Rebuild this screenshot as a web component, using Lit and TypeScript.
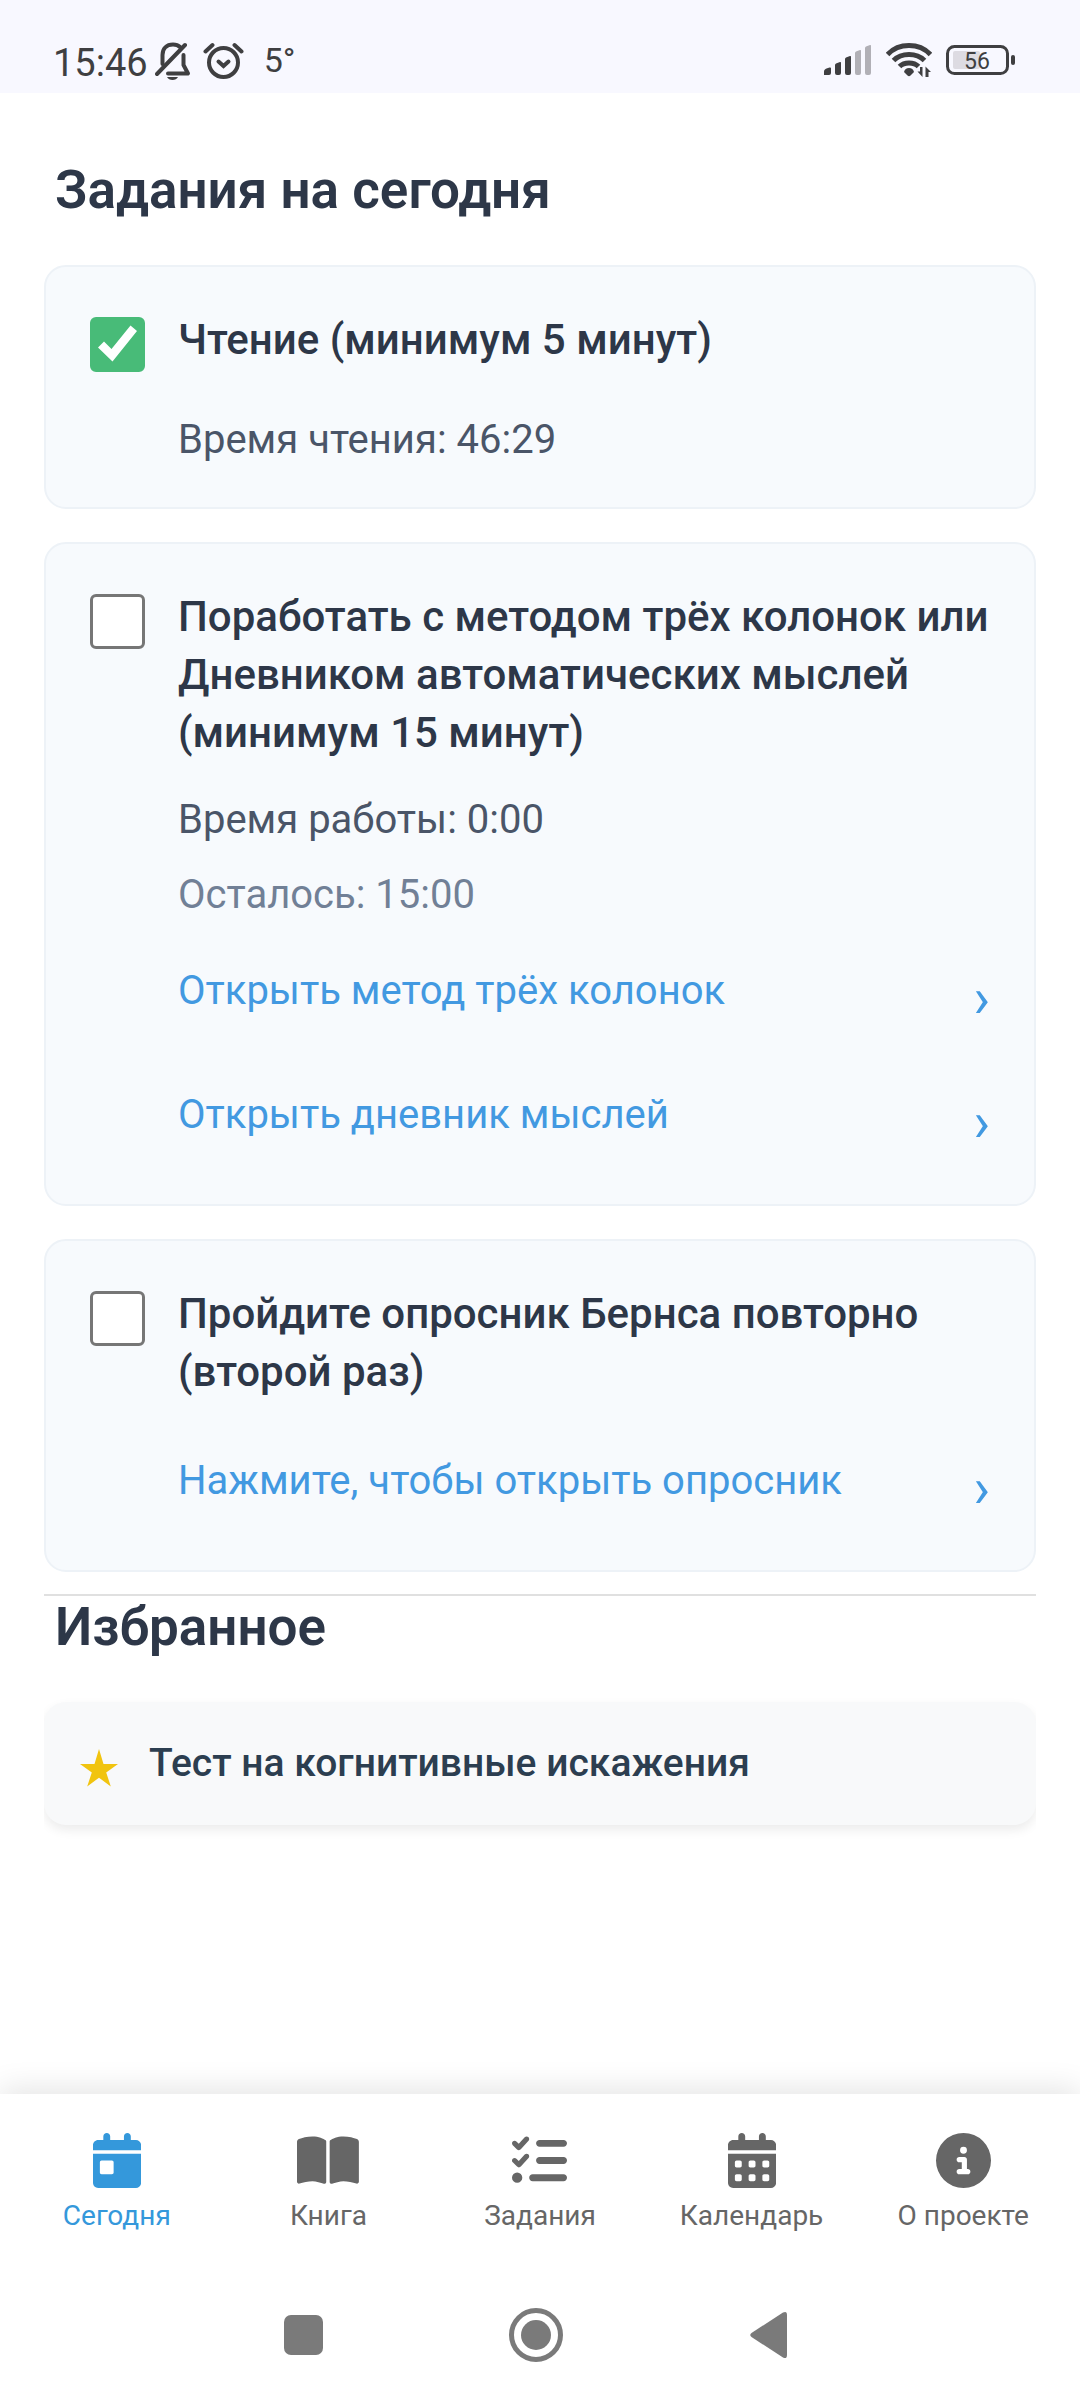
import { LitElement, html, svg, css, nothing, type SVGTemplateResult } from "lit";
import { customElement, property } from "lit/decorators.js";

interface Task {
  id: string;
  title: string;
  done: boolean;
  spent?: string;
  left?: string;
  links: string[];
}

interface Tab {
  label: string;
  href: string;
  width: number;
  icon: SVGTemplateResult;
}

const TASKS: Task[] = [
  { id: "reading", title: "Чтение (минимум 5 минут)", done: true, spent: "Время чтения: 46:29", links: [] },
  {
    id: "columns",
    title: "Поработать с методом трёх колонок или Дневником автоматических мыслей (минимум 15 минут)",
    done: false,
    spent: "Время работы: 0:00",
    left: "Осталось: 15:00",
    links: ["Открыть метод трёх колонок", "Открыть дневник мыслей"],
  },
  {
    id: "burns",
    title: "Пройдите опросник Бернса повторно (второй раз)",
    done: false,
    links: ["Нажмите, чтобы открыть опросник"],
  },
];

const TABS: Tab[] = [
  {
    label: "Сегодня",
    href: "#today",
    width: 448,
    icon: svg`<path d="M128 0c17.7 0 32 14.3 32 32V64H288V32c0-17.7 14.3-32 32-32s32 14.3 32 32V64h48c26.5 0 48 21.5 48 48v48H0V112C0 85.500 21.500 64 48 64H96V32c0-17.700 14.300-32 32-32zM0 192H448V464c0 26.500-21.500 48-48 48H48c-26.500 0-48-21.500-48-48V192zm80 64c-8.800 0-16 7.200-16 16v96c0 8.800 7.200 16 16 16h96c8.800 0 16-7.200 16-16V272c0-8.800-7.200-16-16-16H80z"/>`,
  },
  {
    label: "Книга",
    href: "#book",
    width: 576,
    icon: svg`<path d="M249.600 471.500c10.800 3.800 22.400-4.100 22.400-15.500V78.600c0-4.200-1.600-8.400-5-11C247.400 52 202.400 32 144 32C93.500 32 46.300 45.300 18.100 56.100C6.800 60.500 0 71.700 0 83.800V454.100c0 11.900 12.800 20.200 24.100 16.500C55.600 460.100 105.500 448 144 448c33.900 0 79 14 105.600 23.500zm76.800 0C353 462 398.100 448 432 448c38.500 0 88.400 12.100 119.900 22.600c11.300 3.800 24.100-4.600 24.100-16.500V83.800c0-12.100-6.800-23.300-18.100-27.600C529.700 45.300 482.500 32 432 32c-58.400 0-103.400 20-123 35.600c-3.300 2.600-5 6.800-5 11V456c0 11.400 11.700 19.300 22.400 15.500z"/>`,
  },
  {
    label: "Задания",
    href: "#tasks",
    width: 512,
    icon: svg`<path d="M152.100 38.200c9.900 8.900 10.700 24 1.800 33.900l-72 80c-4.400 4.900-10.600 7.800-17.200 7.900s-12.900-2.400-17.600-7L7 113C-2.300 103.600-2.300 88.400 7 79s24.600-9.400 33.900 0l22.100 22.100 55.100-61.200c8.900-9.900 24-10.700 33.900-1.800zm0 160c9.900 8.900 10.700 24 1.800 33.900l-72 80c-4.400 4.900-10.600 7.800-17.200 7.900s-12.900-2.400-17.600-7L7 273c-9.400-9.400-9.400-24.600 0-33.900s24.600-9.400 33.900 0l22.100 22.100 55.100-61.200c8.900-9.900 24-10.700 33.900-1.800zM224 96c0-17.700 14.300-32 32-32H480c17.700 0 32 14.300 32 32s-14.300 32-32 32H256c-17.700 0-32-14.300-32-32zm0 160c0-17.700 14.300-32 32-32H480c17.700 0 32 14.300 32 32s-14.300 32-32 32H256c-17.700 0-32-14.300-32-32zM160 416c0-17.700 14.300-32 32-32H480c17.700 0 32 14.300 32 32s-14.300 32-32 32H192c-17.700 0-32-14.300-32-32zM48 368a48 48 0 1 1 0 96 48 48 0 1 1 0-96z"/>`,
  },
  {
    label: "Календарь",
    href: "#calendar",
    width: 448,
    icon: svg`<path fill-rule="evenodd" d="M128 0c17.700 0 32 14.300 32 32V64H288V32c0-17.700 14.300-32 32-32s32 14.300 32 32V64h48c26.500 0 48 21.500 48 48v48H0V112C0 85.500 21.500 64 48 64H96V32c0-17.700 14.300-32 32-32zM0 192H448V464c0 26.500-21.500 48-48 48H48c-26.500 0-48-21.500-48-48V192zM80 256c-8.800 0-16 7.200-16 16v32c0 8.800 7.200 16 16 16h32c8.800 0 16-7.200 16-16v-32c0-8.800-7.200-16-16-16zM208 256c-8.800 0-16 7.200-16 16v32c0 8.800 7.200 16 16 16h32c8.800 0 16-7.200 16-16v-32c0-8.800-7.200-16-16-16zM336 256c-8.800 0-16 7.200-16 16v32c0 8.800 7.200 16 16 16h32c8.800 0 16-7.200 16-16v-32c0-8.800-7.200-16-16-16zM80 384c-8.800 0-16 7.200-16 16v32c0 8.800 7.200 16 16 16h32c8.800 0 16-7.200 16-16v-32c0-8.800-7.200-16-16-16zM208 384c-8.800 0-16 7.200-16 16v32c0 8.800 7.200 16 16 16h32c8.800 0 16-7.200 16-16v-32c0-8.800-7.200-16-16-16zM336 384c-8.800 0-16 7.200-16 16v32c0 8.800 7.200 16 16 16h32c8.800 0 16-7.200 16-16v-32c0-8.800-7.200-16-16-16z"/>`,
  },
  {
    label: "О проекте",
    href: "#about",
    width: 512,
    icon: svg`<path d="M256 512A256 256 0 1 0 256 0a256 256 0 1 0 0 512zM216 336h24V272H216c-13.300 0-24-10.700-24-24s10.700-24 24-24h48c13.300 0 24 10.700 24 24v88h8c13.300 0 24 10.700 24 24s-10.700 24-24 24H216c-13.300 0-24-10.700-24-24s10.700-24 24-24zm40-208a32 32 0 1 1 0 64 32 32 0 1 1 0-64z"/>`,
  },
];

@customElement("status-bar")
export class StatusBar extends LitElement {
  static styles = css`
    :host {
      display: flex;
      justify-content: space-between;
      align-items: flex-start;
      padding: 42px 65px 9px 53px;
      background: #f8f8ff;
      color: #3f3f41;
    }
    .group {
      display: flex;
      align-items: flex-start;
    }
    .time {
      font-size: 38px;
      line-height: 42px;
    }
    .bell {
      margin-left: 7px;
    }
    .alarm {
      margin-left: 12px;
    }
    .temp {
      margin-left: 20px;
      font-size: 34px;
      line-height: 36px;
    }
    .signals {
      align-items: center;
      gap: 14px;
    }
  `;

  render() {
    return html`
      <div class="group">
        <span class="time">15:46</span>
        <svg class="bell" width="36" height="38" viewBox="0 0 36 38" fill="none" stroke="currentColor" stroke-width="4" stroke-linecap="round" aria-hidden="true">
          <path d="M2 32L30 3" />
          <path d="M7.500 22V13C7.500 6.500 11.500 2.500 18 2.500C21 2.500 23.500 3.500 25 5" />
          <path d="M28.500 13v10L33 31.500H13" stroke-linejoin="round" />
          <path d="M12 35h11c-1 2-3 3-5.500 3s-4.500-1-5.500-3z" fill="currentColor" stroke="none" />
        </svg>
        <svg class="alarm" width="41" height="38" viewBox="0 0 41 38" fill="none" stroke="currentColor" stroke-width="4" stroke-linecap="round" aria-hidden="true">
          <circle cx="20.500" cy="20.500" r="14.500" />
          <path d="M2.500 9.500L9.500 3M38.500 9.500L31.500 3" />
          <path d="M15.500 19.500l5 4.500 5-4.500" />
        </svg>
        <span class="temp">5°</span>
      </div>
      <div class="group signals">
        <svg width="48" height="32" viewBox="0 0 48 32" aria-hidden="true">
          <g fill="currentColor">
            <path d="M0 31v-3.500c0-1.500 1-2.500 2.500-3l3-1q1.500-.5 1.500 1V29q0 2-2 2z" />
            <path d="M11 29V21q0-1 1-1.500l4-1.500q1-.5 1 1v10q0 2-2 2h-2q-2 0-2-2z" />
            <path d="M21 29V15q0-1 1-1.500l4-1.500q1-.5 1 1v16q0 2-2 2h-2q-2 0-2-2z" />
          </g>
          <g fill="#b1b0b6">
            <path d="M31 29V9q0-1 1-1.500l4-1.500q1-.5 1 1v22q0 2-2 2h-2q-2 0-2-2z" />
            <path d="M41 29V4q0-1 1-1.500l4-1.500q1-.5 1 1v27q0 2-2 2h-2q-2 0-2-2z" />
          </g>
        </svg>
        <svg width="46" height="36" viewBox="0 0 46 36" fill="none" stroke="currentColor" stroke-width="5" aria-hidden="true">
          <path d="M1.500 12.500Q10 3.500 23 3.500T44.500 12.500" />
          <path d="M7.500 18.500Q13.500 12.500 23 12.500T38.500 18.500" />
          <path d="M13.500 24.500Q17 21 23 21T32.500 24.500" />
          <path d="M18 30q1-4 5-4t5 4l-3.500 3.500q-1.500 1.500-3 0z" fill="currentColor" stroke="none" />
          <path d="M36.500 25v10l-5-5.500h2.500v-4.500zM39.500 35V24.500l5.500 5.500h-2.500v5z" fill="currentColor" stroke="none" />
        </svg>
        <svg width="69" height="30" viewBox="0 0 69 30" aria-hidden="true">
          <rect x="7" y="6" width="27" height="18" rx="2" fill="#dddbe2" />
          <rect x="1.500" y="1.500" width="60" height="27" rx="7" fill="none" stroke="currentColor" stroke-width="3" />
          <rect x="65" y="10" width="4" height="10" rx="2" fill="currentColor" />
          <text x="31" y="24" text-anchor="middle" font-size="23" fill="currentColor">56</text>
        </svg>
      </div>
    `;
  }
}

@customElement("task-card")
export class TaskCard extends LitElement {
  @property({ attribute: false }) task!: Task;

  static styles = css`
    :host {
      display: block;
    }
    .card {
      display: grid;
      grid-template-columns: 55px 1fr;
      column-gap: 33px;
      padding: 44px;
      border: 2px solid #edf2f7;
      border-radius: 22px;
      background: #f7fafd;
    }
    .check {
      display: grid;
      align-self: start;
      margin-top: 6px;
    }
    .box,
    .tick {
      grid-area: 1 / 1;
      width: 55px;
      height: 55px;
    }
    .box {
      box-sizing: border-box;
      appearance: none;
      margin: 0;
      border: 3px solid #767676;
      border-radius: 6px;
      background: #ffffff;
    }
    .box:checked {
      border-color: #48bb78;
      background: #48bb78;
    }
    .tick {
      pointer-events: none;
      visibility: hidden;
    }
    .box:checked + .tick {
      visibility: visible;
    }
    .title {
      display: block;
      font-size: 42px;
      font-weight: 500;
      line-height: 58px;
      color: #2d3748;
    }
    .meta {
      display: grid;
      gap: 28px;
      margin-top: 34px;
    }
    .meta.done {
      margin-top: 47px;
    }
    .line {
      margin: 0;
      font-size: 40px;
      line-height: 47px;
      color: #4a5568;
    }
    .line.left {
      color: #718096;
    }
    .links {
      display: grid;
      gap: 33px;
      margin-top: 34px;
    }
    .meta + .links {
      margin-top: 27px;
    }
    .link {
      display: flex;
      justify-content: space-between;
      align-items: flex-start;
      padding: 22px 0 6px;
      font-size: 40px;
      line-height: 47px;
      color: #4299e1;
      text-decoration: none;
    }
    .arrow {
      font-size: 55px;
      line-height: 63px;
    }
  `;

  render() {
    const { id, title, done, spent, left, links } = this.task;
    return html`
      <article class="card">
        <div class="check">
          <input class="box" type="checkbox" id=${id} .checked=${done} />
          <svg class="tick" viewBox="0 0 55 55" aria-hidden="true">
            <path d="M8 30.500L14 24.500L21.500 32L40.500 8.500L47 14L22.500 44.500Z" fill="#ffffff" />
          </svg>
        </div>
        <div class="body">
          <label class="title" for=${id}>${title}</label>
          ${spent
            ? html`<div class="meta ${done ? "done" : ""}">
                <p class="line">${spent}</p>
                ${left ? html`<p class="line left">${left}</p>` : nothing}
              </div>`
            : nothing}
          ${links.length
            ? html`<div class="links">
                ${links.map((text) => html`<a class="link" href="#${id}"><span>${text}</span><span class="arrow" aria-hidden="true">›</span></a>`)}
              </div>`
            : nothing}
        </div>
      </article>
    `;
  }
}

@customElement("tab-bar")
export class TabBar extends LitElement {
  static styles = css`
    :host {
      display: block;
      background: #ffffff;
      box-shadow: 0 -6px 28px rgba(0, 0, 0, 0.1);
    }
    .tabs {
      display: grid;
      grid-template-columns: repeat(5, 1fr);
      padding: 39px 11px 38px;
    }
    .tab {
      display: flex;
      flex-direction: column;
      align-items: center;
      gap: 11px;
      font-size: 28px;
      line-height: 33px;
      color: #666666;
      text-decoration: none;
    }
    .tab[aria-current] {
      color: #3498db;
    }
    .icon {
      height: 55px;
      fill: currentColor;
    }
  `;

  render() {
    return html`
      <nav class="tabs">
        ${TABS.map(
          (tab, i) => html`
            <a class="tab" href=${tab.href} aria-current=${i === 0 ? "page" : nothing}>
              <svg class="icon" viewBox="0 0 ${tab.width} 512" aria-hidden="true">${tab.icon}</svg>
              <span>${tab.label}</span>
            </a>
          `
        )}
      </nav>
    `;
  }
}

@customElement("system-bar")
export class SystemBar extends LitElement {
  static styles = css`
    :host {
      display: flex;
      justify-content: center;
      gap: 178px;
      padding: 37px 8px 37px 0;
      background: #ffffff;
    }
    .key {
      display: block;
      padding: 0;
      border: 0;
      background: none;
      color: #7a7a7a;
    }
    .glyph {
      display: block;
      width: 56px;
      height: 56px;
      fill: currentColor;
    }
  `;

  render() {
    return html`
      <button class="key" aria-label="Недавние">
        <svg class="glyph" viewBox="0 0 56 56"><rect x="10" y="8" width="39" height="40" rx="7" /></svg>
      </button>
      <button class="key" aria-label="Домой">
        <svg class="glyph" viewBox="0 0 56 56">
          <circle cx="28" cy="28" r="24.500" fill="none" stroke="currentColor" stroke-width="5" />
          <circle cx="28" cy="28" r="15" />
        </svg>
      </button>
      <button class="key" aria-label="Назад">
        <svg class="glyph" viewBox="0 0 56 56">
          <path d="M9.500 26L41 5.500Q45 3.500 45 8V48Q45 52.500 41 50.500L9.500 30Q7 28 9.500 26Z" />
        </svg>
      </button>
    `;
  }
}

@customElement("app-root")
export class AppRoot extends LitElement {
  static styles = css`
    :host {
      display: flex;
      flex-direction: column;
      min-height: 100vh;
      background: #ffffff;
      font-family: Roboto, "Liberation Sans", sans-serif;
    }
    .content {
      flex: 1;
      padding: 66px 44px;
    }
    .heading {
      margin: 0 11px 44px;
      font-size: 53px;
      font-weight: 600;
      line-height: 62px;
      color: #2d3748;
    }
    .tasks {
      display: grid;
      gap: 33px;
    }
    .rule {
      margin: 22px 0 0;
      border: 0;
      border-top: 2px solid #e0e0e0;
    }
    .favorite {
      display: flex;
      align-items: center;
      gap: 31px;
      padding: 38px 36px;
      border-radius: 22px;
      background: #f8f9fa;
      box-shadow: 0 5px 11px rgba(0, 0, 0, 0.08);
      font-size: 39px;
      font-weight: 500;
      line-height: 47px;
      color: #2c3e50;
      text-decoration: none;
    }
    .favorites {
      overflow: hidden;
      padding-bottom: 22px;
    }
    .star {
      width: 38px;
      height: 46px;
      fill: #f1c40f;
    }
  `;

  render() {
    return html`
      <status-bar></status-bar>
      <main class="content">
        <h2 class="heading">Задания на сегодня</h2>
        <section class="tasks">${TASKS.map((task) => html`<task-card .task=${task}></task-card>`)}</section>
        <hr class="rule" />
        <section class="favorites">
          <h2 class="heading">Избранное</h2>
          <a class="favorite" href="#distortions">
            <svg class="star" viewBox="0 0 38 46" aria-hidden="true">
              <path d="M19 8L23.500 23H38L26.200 31.400L30.800 45.500L19 36.700L7.200 45.500L11.800 31.400L0 23H14.500Z" />
            </svg>
            <span>Тест на когнитивные искажения</span>
          </a>
        </section>
      </main>
      <tab-bar></tab-bar>
      <system-bar></system-bar>
    `;
  }
}
